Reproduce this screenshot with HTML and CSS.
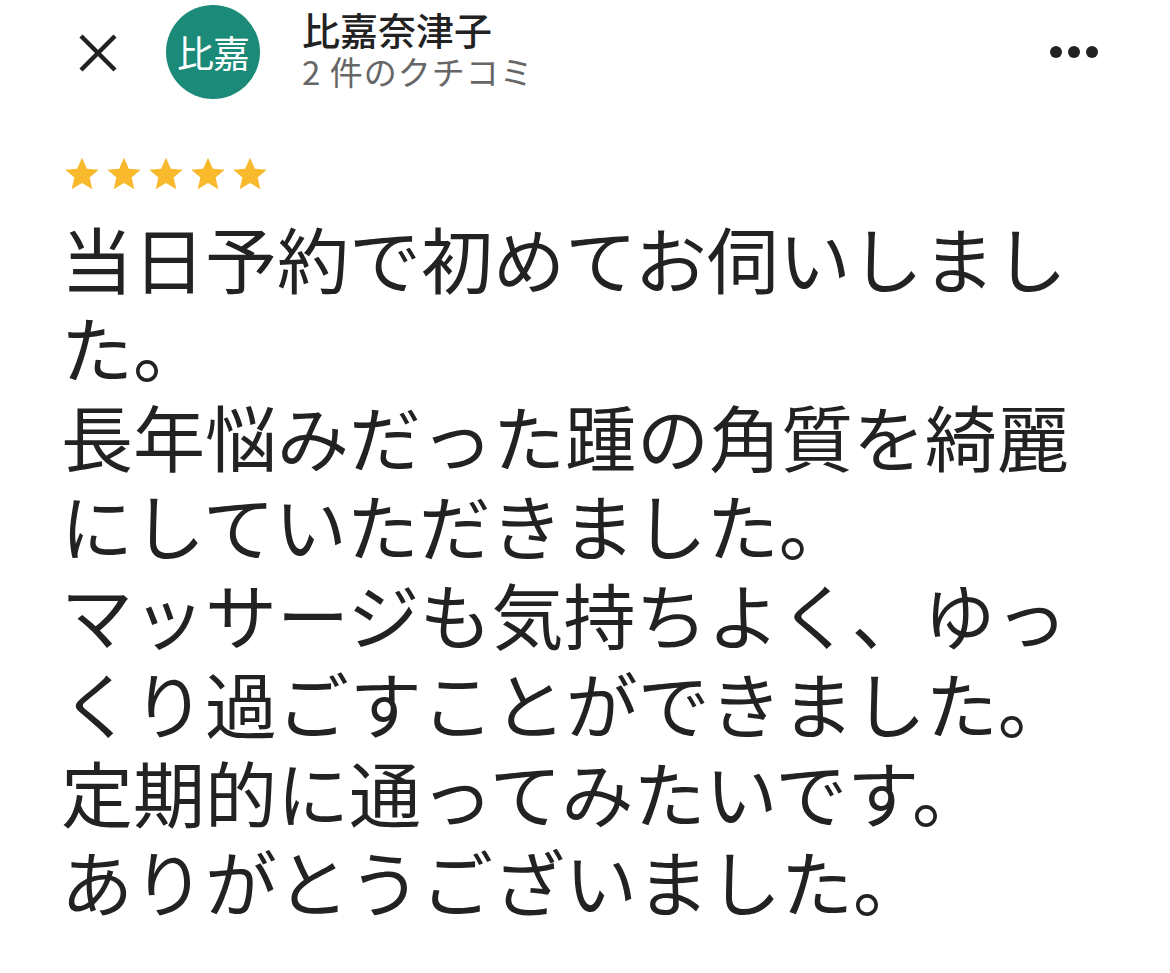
FILE: index.html
```html
<!DOCTYPE html>
<html lang="ja">
<head>
<meta charset="utf-8">
<link rel="stylesheet" href="styles.css">
</head>
<body>
<div class="page">
  <header class="header">
    <button class="close" aria-label="閉じる">
      <svg width="40" height="40" viewBox="0 0 40 40"><path d="M3 3 L37 37 M37 3 L3 37" stroke="#222" stroke-width="4.5" fill="none"/></svg>
    </button>
    <div class="avatar">比嘉</div>
    <div class="who">
      <div class="name">比嘉奈津子</div>
      <div class="count">2 件のクチコミ</div>
    </div>
    <div class="more"><span></span><span></span><span></span></div>
  </header>
  <div class="stars">
    <svg viewBox="0 0 24 24"><path d="M12 2.2l2.9 6.6 7.1.6-5.4 4.7 1.6 7-6.2-3.7-6.2 3.7 1.6-7L2 9.4l7.1-.6z"/></svg>
    <svg viewBox="0 0 24 24"><path d="M12 2.2l2.9 6.6 7.1.6-5.4 4.7 1.6 7-6.2-3.7-6.2 3.7 1.6-7L2 9.4l7.1-.6z"/></svg>
    <svg viewBox="0 0 24 24"><path d="M12 2.2l2.9 6.6 7.1.6-5.4 4.7 1.6 7-6.2-3.7-6.2 3.7 1.6-7L2 9.4l7.1-.6z"/></svg>
    <svg viewBox="0 0 24 24"><path d="M12 2.2l2.9 6.6 7.1.6-5.4 4.7 1.6 7-6.2-3.7-6.2 3.7 1.6-7L2 9.4l7.1-.6z"/></svg>
    <svg viewBox="0 0 24 24"><path d="M12 2.2l2.9 6.6 7.1.6-5.4 4.7 1.6 7-6.2-3.7-6.2 3.7 1.6-7L2 9.4l7.1-.6z"/></svg>
  </div>
  <p class="review">当日予約で初めてお伺いしました。<br>長年悩みだった踵の角質を綺麗にしていただきました。<br>マッサージも気持ちよく、ゆっくり過ごすことができました。<br>定期的に通ってみたいです。<br>ありがとうございました。</p>
</div>
</body>
</html>
```
FILE: styles.css
```css
* { box-sizing: border-box; }
html, body { margin: 0; padding: 0; background: #fff; }
body {
  font-family: "Noto Sans CJK JP", "Noto Sans", Roboto, sans-serif;
  color: #202124;
  width: 1170px;
  height: 973px;
  overflow: hidden;
}
.page { padding: 0 0 0 65px; }
.header {
  display: flex;
  align-items: center;
  height: 104px;
}
.close {
  border: 0;
  background: none;
  padding: 0;
  width: 40px;
  height: 40px;
  margin-left: 13px;
  margin-top: 2px;
  display: flex;
}
.avatar {
  width: 94px;
  height: 94px;
  border-radius: 50%;
  background: #1b8a79;
  color: #fff;
  font-size: 37px;
  display: flex;
  align-items: center;
  justify-content: center;
  margin-left: 48px;
  letter-spacing: -1px;
}
.who {
  margin-left: 42px;
  display: flex;
  flex-direction: column;
  margin-top: -6px;
}
.name {
  font-size: 38px;
  line-height: 44px;
  font-weight: 500;
  color: #222;
}
.count {
  font-size: 33px;
  line-height: 40px;
  letter-spacing: 1px;
  color: #666;
}
.more {
  margin-left: auto;
  margin-right: 72px;
  display: flex;
  gap: 6px;
}
.more span {
  width: 12px;
  height: 12px;
  border-radius: 50%;
  background: #222;
}
.stars {
  display: flex;
  gap: 2px;
  margin-top: 50px;
  margin-left: -3px;
}
.stars svg {
  width: 40px;
  height: 40px;
  fill: #f9b92d;
}
.review {
  margin: 18px 0 0 -4px;
  width: 1060px;
  font-size: 72px;
  line-height: 89px;
  color: #222;
  line-break: strict;
}
```
